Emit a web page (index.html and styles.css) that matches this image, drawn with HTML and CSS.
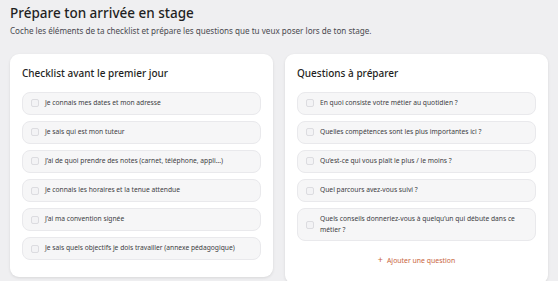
FILE: index.html
```html
<!DOCTYPE html>
<html lang="fr">
<head>
    <meta charset="UTF-8">
    <meta name="viewport" content="width=device-width, initial-scale=1.0">
    <title>Prépare ton arrivée en stage</title>
    <link rel="stylesheet" href="styles.css">
</head>
<body>
    <div class="page">
        <div class="intro">
            <h1>Prépare ton arrivée en stage</h1>
            <p>Coche les éléments de ta checklist et prépare les questions que tu veux poser lors de ton stage.</p>
        </div>

        <div class="cards">
            <div class="card">
                <h2>Checklist avant le premier jour</h2>
                <ul class="items">
                    <li class="item"><span class="box"></span><span>Je connais mes dates et mon adresse</span></li>
                    <li class="item"><span class="box"></span><span>Je sais qui est mon tuteur</span></li>
                    <li class="item"><span class="box"></span><span>J’ai de quoi prendre des notes (carnet, téléphone, appli…)</span></li>
                    <li class="item"><span class="box"></span><span>Je connais les horaires et la tenue attendue</span></li>
                    <li class="item"><span class="box"></span><span>J’ai ma convention signée</span></li>
                    <li class="item"><span class="box"></span><span>Je sais quels objectifs je dois travailler (annexe pédagogique)</span></li>
                </ul>
            </div>

            <div class="card">
                <h2>Questions à préparer</h2>
                <ul class="items">
                    <li class="item"><span class="box"></span><span>En quoi consiste votre métier au quotidien ?</span></li>
                    <li class="item"><span class="box"></span><span>Quelles compétences sont les plus importantes ici ?</span></li>
                    <li class="item"><span class="box"></span><span>Qu’est-ce qui vous plaît le plus / le moins ?</span></li>
                    <li class="item"><span class="box"></span><span>Quel parcours avez-vous suivi ?</span></li>
                    <li class="item"><span class="box"></span><span>Quels conseils donneriez-vous à quelqu’un qui débute dans ce métier ?</span></li>
                </ul>
                <button class="add-btn"><span class="plus">+</span>Ajouter une question</button>
            </div>
        </div>
    </div>
</body>
</html>
```

FILE: styles.css
```css
body {
    margin: 0;
    font-family: "Noto Sans", "Open Sans", sans-serif;
    background-color: #efeff1;
    color: #2a2a2e;
}

.page {
    padding: 4px 10px 0 10px;
}

.intro h1 {
    margin: 0;
    font-size: 13.5px;
    font-weight: 500;
    line-height: 18px;
    color: #1f1f23;
}

.intro p {
    margin: 3px 0 0 0;
    font-size: 8.1px;
    line-height: 12px;
    color: #4a4a50;
}

.cards {
    display: grid;
    grid-template-columns: 1fr 1fr;
    gap: 12px;
    margin-top: 17px;
    align-items: start;
}

.card {
    background: white;
    border-radius: 9px;
    padding: 12px 12px 17px 12px;
    box-shadow: 0 1px 3px rgba(0,0,0,0.1);
}

.card h2 {
    margin: 0;
    font-size: 10px;
    font-weight: 500;
    line-height: 14px;
    color: #1f1f23;
}

.items {
    list-style: none;
    margin: 12px 0 0 0;
    padding: 0;
    display: flex;
    flex-direction: column;
    gap: 6.6px;
}

.item {
    display: flex;
    align-items: center;
    gap: 6px;
    min-height: 22px;
    box-sizing: border-box;
    padding: 5px 10px 5px 8px;
    background: #f6f6f7;
    border: 1px solid #e9e9ec;
    border-radius: 8px;
    font-size: 6.7px;
    line-height: 10.5px;
    color: #3c3c42;
}

.box {
    flex: none;
    width: 8px;
    height: 8px;
    box-sizing: border-box;
    border: 1px solid #dcdce0;
    border-radius: 2px;
    background: #f3f3f5;
}

.add-btn {
    display: block;
    margin: 11px auto 0 auto;
    background: none;
    border: none;
    font-family: inherit;
    font-size: 6.9px;
    color: #c8643c;
    cursor: pointer;
}

.add-btn .plus {
    font-size: 9px;
    margin-right: 4px;
}
```
